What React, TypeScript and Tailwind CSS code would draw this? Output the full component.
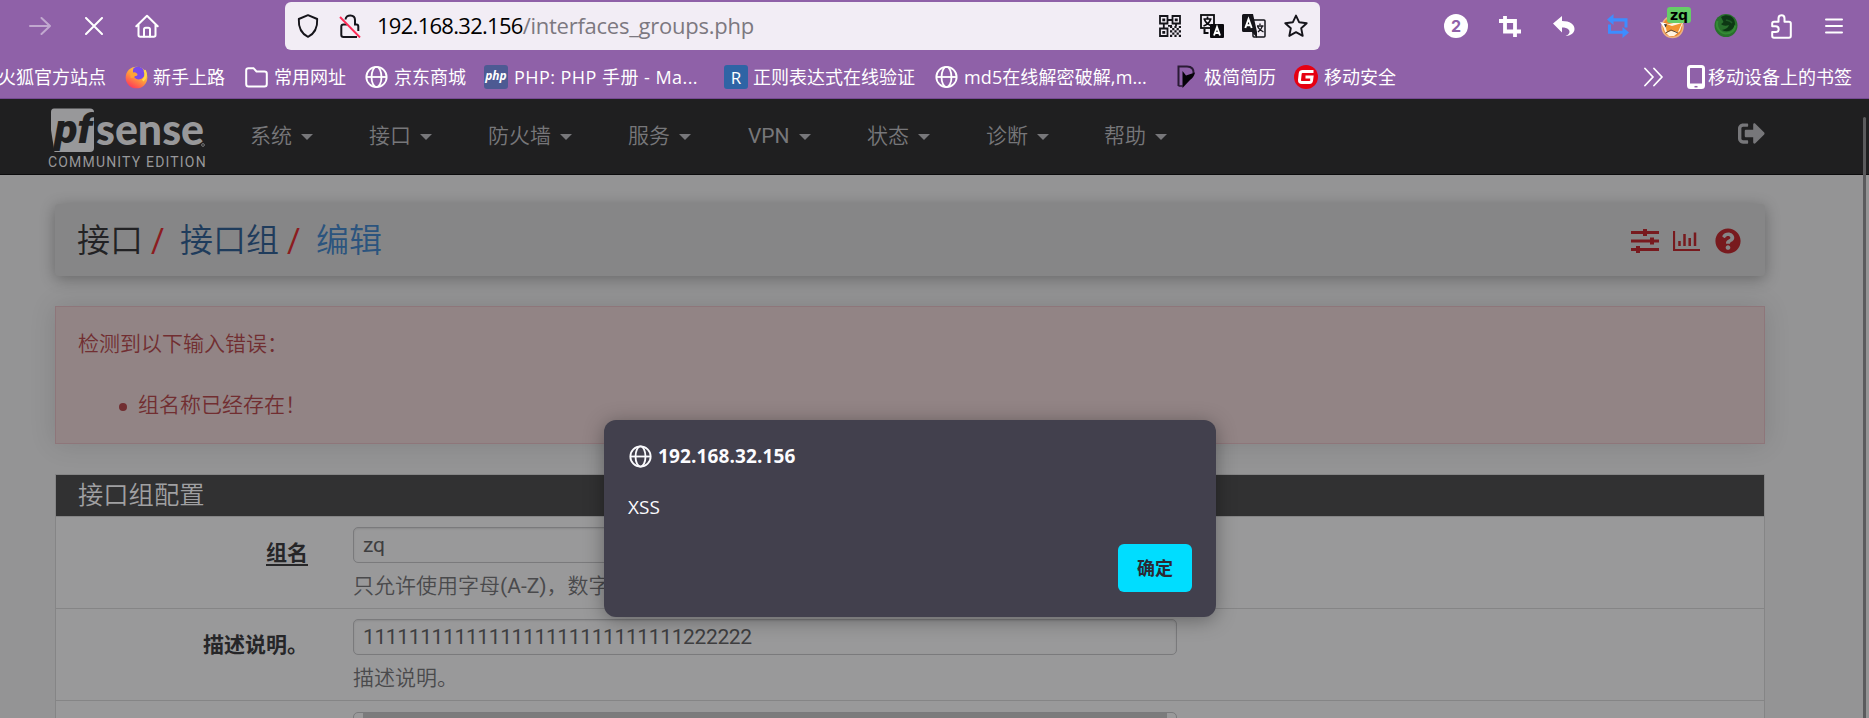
import React from "react";
import { FaQuestionCircle, FaSignOutAlt } from "react-icons/fa";

const ui = "font-['Open_Sans','Noto_Sans_CJK_SC',sans-serif]";
const web = "font-[Roboto,'Noto_Sans_CJK_SC',sans-serif]";

function Globe({ className }: { className: string }) {
  return (
    <svg className={className} viewBox="0 0 24 24" fill="none" stroke="currentColor" strokeWidth="1.9">
      <circle cx="12" cy="12" r="10.6" />
      <ellipse cx="12" cy="12" rx="5.2" ry="10.6" />
      <path d="M1.5 12h21" />
    </svg>
  );
}

function UrlBar() {
  return (
    <div className="ml-[126px] flex h-12 w-[1035px] shrink-0 items-center rounded-md bg-[#f2edf5] text-[#15141a]">
      <svg className="ml-3 h-6 w-[22px] shrink-0" viewBox="0 0 22 24" fill="none" stroke="currentColor" strokeWidth="1.9" strokeLinejoin="round">
        <path d="M11 1.2 L20.2 5 C20.6 13 18 19.5 11 22.8 C4 19.5 1.4 13 1.8 5 Z" />
      </svg>
      <svg className="ml-5 h-6 w-[22px] shrink-0" viewBox="0 0 22 24" fill="none" strokeWidth="2">
        <path d="M6.5 5.5 C7 0 16 0 16 6 V10.5 H17.5 Q19.3 10.5 19.3 12.5 V17 M8 10.5 H4.5 Q2.3 10.5 2.3 12.5 V21 Q2.3 23 4.5 23 H18" stroke="#15141a" />
        <path d="M1 3 L21 23.5" stroke="#ff2a55" strokeWidth="1.9" />
      </svg>
      <div className="ml-[16px] w-[782px] shrink-0 whitespace-nowrap pb-[2px] text-[22px] leading-[28px] tracking-[-0.72px] text-black">
        192.168.32.156<span className="tracking-[-0.25px] text-[#7c7880]">/interfaces_groups.php</span>
      </div>
      <svg className="h-[22px] w-[22px] shrink-0" viewBox="0 0 22 22" fill="none" stroke="#15141a" strokeWidth="1.8">
        <path d="M1 1h7.5v7.5H1zM13.5 1H21v7.5h-7.5zM1 13.5h7.5V21H1z" />
        <path d="M3.3 4.8H6.200M15.800 4.8h2.9M3.3 17.3H6.200" strokeWidth="2.8" />
        <path d="M9 5h4M4.8 9v4M17 9v2M9 10.8h4" strokeWidth="1.8" />
        <path d="M11 12h11M11 16.400h11M11 20.800h11" strokeWidth="2.2" strokeDasharray="2.2 2.2" />
        <path d="M13.200 14.200h9M13.200 18.600h9" strokeWidth="2.2" strokeDasharray="2.2 2.2" />
      </svg>
      <svg className="ml-[19px] h-6 w-6 shrink-0" viewBox="0 0 24 24" fill="none" stroke="#0b0a0e" strokeWidth="1.5">
        <rect x="1" y="1" width="13" height="13" fill="#f2edf5" strokeWidth="1.800" />
        <path d="M7.5 2.5v2M3.5 5h8M4.5 5.5c1 3 3.500 5 7 6.500M10.500 5.500c-1 3-3 5-7 6.500" strokeWidth="1.700" />
        <rect x="10" y="10" width="14" height="14" rx="1" fill="#0b0a0e" stroke="none" />
        <path d="M4.500 15v4h4" strokeWidth="2" />
        <path d="M14 21.500l3-8.500 3 8.500M15 19h4" stroke="#fff" strokeWidth="1.900" />
      </svg>
      <svg className="ml-[18px] h-6 w-6 shrink-0" viewBox="0 0 24 24" fill="none" strokeWidth="1.5" stroke="#15141a">
        <rect x="11" y="6" width="12" height="17" rx="1" />
        <path d="M0 1.500Q0 0 1.500 0H11L15 18V24L10 18H1.500Q0 18 0 16.500Z" fill="#15141a" stroke="none" />
        <path d="M3.300 14L6.500 5l3.200 9M4.300 11.300h4.400" stroke="#fff" strokeWidth="1.900" />
        <path d="M18 9.500v1.500M15 12h6.500M15.500 12c1 3 2.500 4 6 6M20.500 12c-1 3-2 4-4.500 6" strokeWidth="1.300" />
      </svg>
      <svg className="ml-[18px] h-6 w-6 shrink-0" viewBox="0 0 24 24" fill="none" stroke="currentColor" strokeWidth="1.9" strokeLinejoin="round">
        <path d="M12 1.600L15.200 8.300L22.700 9.200L17.200 14.200L18.700 21.900L12 18.200L5.300 21.900L6.800 14.200L1.300 9.200L8.800 8.300Z" />
      </svg>
    </div>
  );
}

function Toolbar() {
  return (
    <div className="flex h-[52px] items-center text-white">
      <svg className="ml-[29px] h-6 w-[22px] shrink-0 opacity-45" viewBox="0 0 22 24" fill="none" stroke="currentColor" strokeWidth="2" strokeLinecap="round" strokeLinejoin="round">
        <path d="M1 12h20M12.500 4l8.500 8-8.500 8" />
      </svg>
      <svg className="ml-[34px] h-[18px] w-[18px] shrink-0" viewBox="0 0 18 18" fill="none" stroke="currentColor" strokeWidth="2" strokeLinecap="round">
        <path d="M1 1l16 16M17 1L1 17" />
      </svg>
      <svg className="ml-[32px] h-6 w-6 shrink-0" viewBox="0 0 24 24" fill="none" stroke="currentColor" strokeWidth="2" strokeLinecap="round" strokeLinejoin="round">
        <path d="M1.300 12.200L12 1.700l10.700 10.500M3.500 10.500V21q0 1.700 1.700 1.700h13.600q1.700 0 1.700-1.700V10.500" />
        <path d="M9 22.500V15.500q0-1.700 1.700-1.700h2.600q1.700 0 1.700 1.700v7" />
      </svg>
      <UrlBar />
      <div className="ml-[124px] flex h-6 w-6 shrink-0 items-center justify-center rounded-full bg-white font-[Inter,sans-serif] text-[16px] font-bold leading-none text-[#8f61a8]">2</div>
      <svg className="ml-[31px] h-[22px] w-[22px] shrink-0" viewBox="0 0 22 22" fill="none" stroke="currentColor" strokeWidth="3.800">
        <path d="M0 6h16v10.500M22 16.500H6V1M16 16v6" />
      </svg>
      <svg className="ml-[32px] h-[22px] w-[22px] shrink-0" viewBox="0 0 22 22" fill="currentColor">
        <path d="M0 8.500L9 1V6C17 6 21.500 9.500 21.500 14C21.500 18 17.500 21 12.500 21C16.500 19.500 17.500 16.500 15.500 14.500C14 13 12 12.500 9 12.500V17.500Z" />
      </svg>
      <svg className="ml-[32px] h-6 w-[22px] shrink-0" viewBox="0 0 22 24" fill="#3d8dff">
        <path d="M0 5.500L6.500 0v4.200H20.500V13.500H17.500V7.500H6.500V11Z" />
        <path d="M22 18.500L15.500 13v3.700H4V10.500H1V19.800H15.500V24Z" />
      </svg>
      <div className="relative ml-[31px] h-8 w-[30px] shrink-0">
        <svg className="absolute left-0 top-[5px] h-6 w-6" viewBox="0 0 24 24">
          <circle cx="12.500" cy="12" r="10.500" fill="#f08a2c" stroke="#e9b184" strokeWidth="1.500" />
          <path d="M2 8l7 1 9-2 5 0-3 9-6 5H9l-4-4Z" fill="#fff3e0" />
          <path d="M5 8.500l7 2.500 10-3-4 9-7-1-4 1.500Z" fill="#f29431" />
          <path d="M5.500 18l5.500-3 7 3" fill="none" stroke="#5b4a3c" strokeWidth="1" />
          <path d="M0 7l6 1.500-2 4Z" fill="#fff" />
          <path d="M4 9l3 .500-1.500 3Z" fill="#333" />
        </svg>
        <div className="absolute -right-px -top-[3px] flex h-4 w-6 items-center justify-center rounded-[3px] bg-[#66cd68] pb-px font-['DejaVu_Sans',sans-serif] text-[14px] font-bold leading-none text-black">zq</div>
      </div>
      <svg className="ml-[24px] h-6 w-6 shrink-0" viewBox="0 0 24 24">
        <circle cx="12" cy="11.500" r="11.500" fill="#28702c" />
        <path d="M7 3c6-4 14-1 14 7-1 6-7 9-13 6 4-1 6-2 7-5-3 1-6 1-8-1 2-1 3-2 2-3Z" fill="#0d3814" />
        <path d="M3.500 7c-2 6 2 12 8 12.500 6 0 9-3 10-8" fill="none" stroke="#348a35" strokeWidth="2" />
        <path d="M12 6c2 1 4 0 6 3" fill="none" stroke="#1f5a26" strokeWidth="1.500" />
      </svg>
      <svg className="ml-[33px] h-[25px] w-[21px] shrink-0" viewBox="0 0 21 25" fill="none" stroke="currentColor" strokeWidth="2" strokeLinejoin="round">
        <path d="M1.200 12.300V9.500Q1.200 7.800 3 7.800H7.500V4.500C7.500 0.300 13.500 0.300 13.500 4.500V7.800H18Q19.800 7.800 19.800 9.500V22Q19.800 23.800 18 23.800H3Q1.200 23.800 1.200 22V18H4.500C8.800 18 8.800 12.300 4.500 12.300Z" />
      </svg>
      <svg className="ml-[33px] h-4 w-[18px] shrink-0" viewBox="0 0 18 16" stroke="currentColor" strokeWidth="2" strokeLinecap="round">
        <path d="M1 1.500h16M1 8h16M1 14.500h16" />
      </svg>
    </div>
  );
}

const label = "shrink-0 whitespace-nowrap text-[18px] leading-6 pb-px";

function Bookmarks() {
  return (
    <div className="flex h-[45px] items-center overflow-hidden pt-[5px] text-white">
      <span className={`${label} -ml-[2px] w-[127px]`}>火狐官方站点</span>
      <svg className="mr-[5px] h-6 w-[23px] shrink-0" viewBox="0 0 24 24">
        <defs>
          <linearGradient id="fx" x1="0.800" y1="0" x2="0.200" y2="1">
            <stop offset="0" stopColor="#ffe04a" />
            <stop offset="0.500" stopColor="#ff9a3c" />
            <stop offset="1" stopColor="#ff2f5d" />
          </linearGradient>
        </defs>
        <circle cx="12" cy="12.500" r="11.300" fill="url(#fx)" />
        <path d="M9 2.500C14-.5 20 2 20.500 8c0 4-3 6.500-6.500 6.500-3 0-5-2-5-4.500 0-2-1.500-4 0-7.500Z" fill="#7a4be8" />
        <path d="M5 6c1 1.500 3 1.500 4.500 1 2 0 4 1.500 3.500 3-1 1.500-3 .5-3.500 2.500L6 13Z" fill="#ffa436" />
        <path d="M20.500 5c1.800 3.500 1.200 8-2 10.800" fill="none" stroke="#ffd84a" strokeWidth="2.600" />
      </svg>
      <span className={`${label} w-[92px]`}>新手上路</span>
      <svg className="mr-[6px] h-[21px] w-[23px] shrink-0" viewBox="0 0 23 21" fill="none" stroke="currentColor" strokeWidth="2">
        <path d="M1.200 17V3.500Q1.200 1.200 3.500 1.200H8.500L11.500 4.500H19.500Q21.800 4.500 21.800 6.800V17Q21.800 19.500 19.500 19.500H3.500Q1.200 19.500 1.200 17Z" />
      </svg>
      <span className={`${label} w-[91px]`}>常用网址</span>
      <Globe className="mr-[6px] h-6 w-[23px] shrink-0" />
      <span className={`${label} w-[90px]`}>京东商城</span>
      <div className="mr-[6px] flex h-6 w-6 shrink-0 items-center justify-center rounded-[3px] bg-[#4d5a93] pb-[3px] text-[12px] font-bold italic leading-none">php</div>
      <span className={`${label} w-[210px] tracking-[0.45px]`}>PHP: PHP 手册 - Ma...</span>
      <div className="mr-[5px] flex h-6 w-6 shrink-0 items-center justify-center rounded-[3px] bg-[#2f64a5] text-[17px] leading-none">R</div>
      <span className={`${label} w-[182px]`}>正则表达式在线验证</span>
      <Globe className="mr-[6px] h-6 w-[23px] shrink-0" />
      <span className={`${label} w-[212px] tracking-[0.1px]`}>md5在线解密破解,m...</span>
      <svg className="mr-[8px] h-6 w-5 shrink-0" viewBox="0 0 20 24">
        <path d="M2.500 21V1.500H11C16 1.500 18 4.500 17.500 8.500" fill="none" stroke="#2a1b35" strokeWidth="2" />
        <path d="M6.500 6L10 10.500L19 7.500Q18 12 14 15L6.500 23Z" fill="#050308" />
        <path d="M2.500 21H7" stroke="#2a1b35" strokeWidth="1.500" />
      </svg>
      <span className={`${label} w-[90px]`}>极简简历</span>
      <svg className="mr-[6px] h-6 w-6 shrink-0" viewBox="0 0 24 24">
        <circle cx="12" cy="12" r="12" fill="#e60012" />
        <path d="M19.500 6.500H8.500Q6.500 6.500 6.200 8.500L5.500 15Q5.300 17.500 7.800 17.500H15.500Q17.200 17.500 17.500 15.800L18 12H11.500" fill="none" stroke="#fff" strokeWidth="3" />
      </svg>
      <span className={`${label} w-[320px]`}>移动安全</span>
      <svg className="mr-6 h-5 w-[19px] shrink-0" viewBox="0 0 19 20" fill="none" stroke="currentColor" strokeWidth="1.800" strokeLinecap="round" strokeLinejoin="round">
        <path d="M1 1.500L9 10L1 18.500M10 1.500L18 10L10 18.500" />
      </svg>
      <svg className="mr-[3px] h-6 w-[18px] shrink-0" viewBox="0 0 18 24" fill="none">
        <rect x="1.500" y="1.500" width="15" height="21" rx="2" stroke="currentColor" strokeWidth="3" />
        <path d="M1 20.500h16" stroke="currentColor" strokeWidth="4" />
        <path d="M7.500 21.700h3" stroke="#8f61a8" strokeWidth="1.500" />
      </svg>
      <span className={label}>移动设备上的书签</span>
    </div>
  );
}

function Logo() {
  return (
    <div className="ml-12 w-[202px] shrink-0 pt-[7px]">
      <svg className="block h-[52px] w-[168px] overflow-visible" viewBox="48 106 168 52">
        <path d="M54 108.500H90Q94 108.500 94 112V148Q94 152 90 152H54.500L51 130V112Q51 108.500 54 108.500Z" fill="#98989a" />
        <text x="54.500" y="143" fontFamily="Roboto" fontWeight="900" fontStyle="italic" fontSize="41" textLength="38" lengthAdjust="spacingAndGlyphs" fill="#1f1f20">pf</text>
        <text x="96" y="144.500" fontFamily="Lato" fontWeight="900" fontSize="43.500" textLength="108" lengthAdjust="spacingAndGlyphs" fill="#98989a">sense</text>
        <circle cx="203" cy="145" r="1.400" fill="none" stroke="#98989a" strokeWidth="0.700" />
      </svg>
      <div className="-mt-1 whitespace-nowrap font-[Roboto,sans-serif] text-[14px] leading-[16px] tracking-[1.18px] text-[#98989a]">COMMUNITY EDITION</div>
    </div>
  );
}

const menus: [string, string][] = [
  ["系统", "w-[119px] font-[350]"],
  ["接口", "w-[119px] font-[350]"],
  ["防火墙", "w-[140px] font-[350]"],
  ["服务", "w-[120px] font-[350]"],
  ["VPN", "w-[119px] font-normal"],
  ["状态", "w-[119px] font-[350]"],
  ["诊断", "w-[118px] font-[350]"],
  ["帮助", "w-[634px] font-[350]"],
];

function NavBar() {
  return (
    <div className={`flex h-[76px] shrink-0 border-b border-[#0c0c0d] bg-[#1f1f20] text-[#77777a] ${web}`}>
      <Logo />
      {menus.map(([name, style]) => (
        <div key={name} className={`flex h-[73px] shrink-0 items-center gap-[9px] ${style}`}>
          <span className="whitespace-nowrap text-[21px] leading-7">{name}</span>
          <span className="mt-[3px] h-0 w-0 border-x-[6px] border-t-[6px] border-x-transparent border-t-[#77777a]" />
        </div>
      ))}
      <FaSignOutAlt className="mt-[21px] h-[27px] w-[27px] text-[#77777a]" />
    </div>
  );
}

function Breadcrumb() {
  return (
    <div className="flex h-[72px] items-center rounded-[4px] bg-[#868687] pl-[22px] pr-[24px] pt-[2px] text-[33px] font-[350] leading-10 shadow-[0_3px_15px_rgba(0,0,0,0.3)]">
      <span className="w-[74px] text-[#222224]">接口</span>
      <span className="w-[29px] font-normal text-[#8c1c20]">/</span>
      <span className="w-[107px] text-[#1f3c5c]">接口组</span>
      <span className="w-[29px] font-normal text-[#8c1c20]">/</span>
      <span className="text-[#2b547e]">编辑</span>
      <div className="ml-auto flex items-center text-[#781a1e]">
        <svg className="h-6 w-7" viewBox="0 0 28 24" stroke="currentColor" fill="none">
          <path d="M0 3.500h28M0 12h28M0 20.500h28" strokeWidth="3" />
          <path d="M14 0v7M21 8.500v7M7 17v7" strokeWidth="4" />
        </svg>
        <svg className="ml-[14px] h-5 w-[27px]" viewBox="0 0 27 20" stroke="currentColor" fill="none">
          <path d="M1 0v19h26" strokeWidth="2.200" />
          <path d="M6.500 10v5M11.500 3v12M16.700 7v8M22 1.500v13.500" strokeWidth="2.500" />
        </svg>
        <FaQuestionCircle className="ml-[15px] h-[26px] w-[26px]" />
      </div>
    </div>
  );
}

function FormRow({ name, underline, value, children }: { name: string; underline?: boolean; value: string; children: React.ReactNode }) {
  return (
    <div className="flex h-[92px] border-b border-[#858586]">
      <div className="flex w-[252px] shrink-0 justify-end pt-[22px] text-[21px] font-bold leading-7 text-[#262628]">
        <span className={underline ? "h-[27px] border-b-2 border-[#262628]" : ""}>{name}</span>
      </div>
      <div className="ml-[45px] w-[824px] pt-[10px]">
        <div className="h-9 rounded-[5px] border border-[#7a7a7c] bg-[#99999a] pl-[9px] text-[21px] leading-[35px] tracking-[-0.37px] text-[#3e3e40] shadow-[inset_0_1px_2px_rgba(0,0,0,0.1)]">{value}</div>
        <div className="mt-[9px] whitespace-nowrap text-[21px] font-[350] leading-7 text-[#4a4a4c]">{children}</div>
      </div>
    </div>
  );
}

function Dialog() {
  return (
    <div className={`absolute left-[604px] top-[420px] flex h-[197px] w-[612px] flex-col rounded-xl bg-[#42404d] px-6 text-[#fbfbfe] shadow-[0_3px_20px_rgba(0,0,0,0.35)] ${ui}`}>
      <div className="mt-[24px] flex h-6 items-center gap-[6px] pl-px">
        <Globe className="h-[23px] w-[23px]" />
        <span className="pb-px text-[19px] font-bold leading-6 tracking-[0.12px]">192.168.32.156</span>
      </div>
      <div className="mt-[27px] text-[19px] leading-6 tracking-[0.1px]">XSS</div>
      <button className="mt-[25px] h-12 w-[74px] self-end rounded-md bg-[#00ddff] text-[18px] font-bold leading-6 text-[#2b2a33]">确定</button>
    </div>
  );
}

export default function App() {
  return (
    <div className={`relative flex h-[718px] w-[1869px] flex-col overflow-hidden bg-[#949495] ${ui}`}>
      <header className="h-[99px] shrink-0 border-b border-[#754a91] bg-[#8f61a8]">
        <Toolbar />
        <Bookmarks />
      </header>
      <NavBar />
      <main className={`ml-[55px] mt-[29px] w-[1710px] ${web}`}>
        <Breadcrumb />
        <section className="mt-[30px] h-[138px] border border-[#8e767a] bg-[#928485] pl-[22px] pt-[23px] text-[21px] font-[350] leading-7 text-[#712e31] shadow-[0_0_25px_rgba(0,0,0,0.12)]">
          <p>检测到以下输入错误：</p>
          <ul className="mt-[33px] flex items-center pl-[41px]">
            <li className="flex items-center">
              <span className="mr-[11px] mt-1 h-2 w-2 rounded-full bg-[#712e31]" />
              组名称已经存在！
            </li>
          </ul>
        </section>
        <section className="mt-[30px] h-[260px] border border-[#858586] bg-[#99999a]">
          <h2 className="flex h-[42px] items-center border-b border-[#858586] bg-[#313132] pl-[22px] text-[25.300px] font-[350] leading-8 text-[#a0a0a2]">接口组配置</h2>
          <FormRow name="组名" underline value="zq">
            只允许使用字母<span className="font-normal">(A-Z)</span>，数字<span className="font-normal">(0-9)</span>
          </FormRow>
          <FormRow name="描述说明。" value="1111111111111111111111111111222222">描述说明。</FormRow>
          <div className="ml-[297px] mt-[11px] h-9 w-[824px] rounded-[5px] border border-[#7a7a7c] px-[9px]">
            <div className="h-full bg-[#7b7b7c]" />
          </div>
        </section>
      </main>
      <div className="absolute bottom-0 right-[3px] top-[117px] w-[3px] rounded-t bg-[#5b5b5d]" />
      <Dialog />
    </div>
  );
}
